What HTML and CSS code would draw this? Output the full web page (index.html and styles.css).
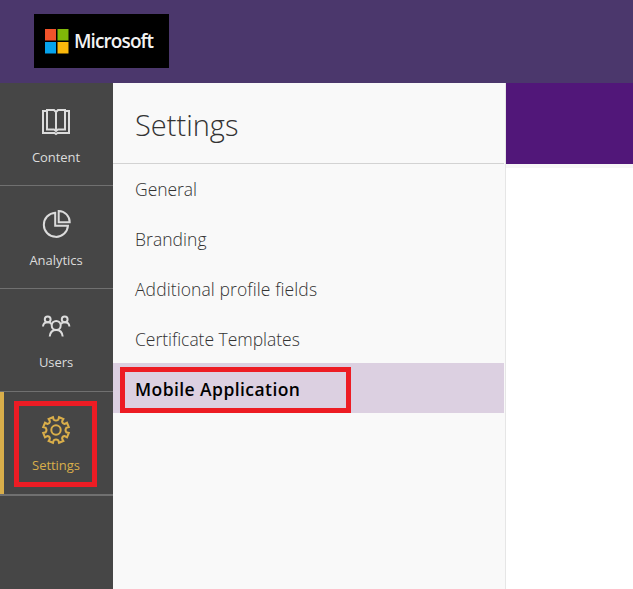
FILE: index.html
```html
<!DOCTYPE html>
<html lang="en">
<head>
<meta charset="utf-8">
<title>Settings</title>
<link rel="stylesheet" href="styles.css">
</head>
<body>
<header class="topbar">
  <div class="logo">
    <svg class="logo-mark" width="24" height="25" viewBox="0 0 24 25"><path fill="#f1532b" d="M0 0h11v11.5H0z"/><path fill="#80b808" d="M12.5 0h11v11.5h-11z"/><path fill="#06a3ec" d="M0 13h11v11.5H0z"/><path fill="#fbb80b" d="M12.5 13h11v11.5h-11z"/></svg>
    <span class="logo-text">Microsoft</span>
  </div>
</header>
<div class="shell">
  <nav class="rail">
    <a class="rail-item">
      <svg class="icon" viewBox="0 0 30 30"><path d="M5.500 5H2v22h11.500l1.500 1 1.500-1H28V5h-3.500M15 6l-2-2H6v19.500h7l2 1.500 2-1.500h7V4h-7zM15 6v19"/></svg>
      <span class="rail-label">Content</span>
    </a>
    <a class="rail-item">
      <svg class="icon analytics" viewBox="0 0 30 30"><path d="M14.200 3.700A12.100 12.100 0 1 0 27 16.700H14.200zM17.700 1.900v11.400h11A11.200 11.200 0 0 0 17.700 1.900z"/></svg>
      <span class="rail-label">Analytics</span>
    </a>
    <a class="rail-item">
      <svg class="icon" viewBox="0 0 30 30"><circle cx="15.200" cy="13.500" r="4.500"/><circle cx="6.700" cy="7.300" r="2.900"/><circle cx="23.700" cy="7.300" r="2.900"/><path d="M8.700 24.500c.4-4 3-6.500 6.500-6.500s6.100 2.500 6.500 6.500M2 14.500c.2-2.600 2.200-4.200 4.700-4.200 1.500 0 2.900.6 3.800 1.700M28.400 14.500c-.2-2.600-2.200-4.200-4.700-4.200-1.500 0-2.900.6-3.800 1.700"/></svg>
      <span class="rail-label raised">Users</span>
    </a>
    <a class="rail-item active">
      <svg class="icon gear" viewBox="0 0 30 30"><circle cx="15" cy="15" r="4.700"/><path d="M12.700 4.700 12 2.200 7.600 4 8.900 6.300Q8.800 8.800 6.300 8.900L4 7.600 2.200 12l2.500.7Q6.300 15 4.700 17.300L2.200 18 4 22.400l2.300-1.300Q8.800 21.200 8.900 23.700L7.600 26l4.400 1.800.7-2.500Q15 23.700 17.300 25.300L18 27.800 22.400 26 21.100 23.700Q21.200 21.200 23.700 21.100L26 22.400 27.800 18 25.300 17.300Q23.700 15 25.300 12.700L27.800 12 26 7.600 23.700 8.900Q21.200 8.800 21.100 6.300L22.400 4 18 2.200 17.300 4.700Q15 6.300 12.700 4.700z"/></svg>
      <span class="rail-label raised">Settings</span>
      <i class="callout callout-rail"></i>
    </a>
  </nav>
  <section class="panel">
    <h1 class="panel-title"><span>Settings</span></h1>
    <ul class="menu">
      <li class="menu-item">General</li>
      <li class="menu-item branding">Branding</li>
      <li class="menu-item fields">Additional profile fields</li>
      <li class="menu-item">Certificate Templates</li>
      <li class="menu-item selected">Mobile Application<i class="callout callout-menu"></i></li>
    </ul>
  </section>
  <main class="main"><div class="banner"></div></main>
</div>
</body>
</html>
```
FILE: styles.css
```css
* { box-sizing: border-box; }
body { margin: 0; height: 589px; overflow: hidden; display: flex; flex-direction: column; background: #fff; font-family: "Open Sans", "Noto Sans", sans-serif; }
.topbar { height: 83px; flex: none; padding: 14px 34px; background: #4b376c; }
.logo { width: 135px; height: 54px; padding: 0 0 0 11px; display: flex; align-items: center; background: #000; }
.logo-mark { flex: none; margin-right: 5px; }
.logo-text { color: #f3f3f3; font-size: 19px; font-weight: 600; line-height: 26px; letter-spacing: -.9px; }
.shell { flex: 1; display: flex; }
.rail { width: 113px; flex: none; background: #464646; }
.rail-item { position: relative; height: 103px; padding-top: 23px; display: flex; flex-direction: column; align-items: center; color: #dcdcdc; border-bottom: 1px solid #707070; }
.rail-item.active { height: 104px; color: #d9ae4a; border-bottom-width: 2px; box-shadow: inset 4px 0 #d9ae4a; }
.icon { width: 30px; height: 30px; margin-left: -1px; flex: none; fill: none; stroke: currentColor; stroke-width: 2; }
.icon.analytics { margin-left: -2px; }
.rail-label { margin: 11px 0 0 -1px; font-size: 13px; line-height: 20px; white-space: nowrap; letter-spacing: -.05px; }
.rail-label.raised { margin-top: 10px; }
.panel { width: 393px; flex: none; padding-right: 1px; background: #f9f9f9; border-right: 1px solid #e6e6e6; }
.panel-title { margin: 0; height: 80px; padding-left: 22px; display: flex; align-items: center; box-shadow: 0 1px #d3d3d3; color: #333; font-size: 29px; font-weight: 300; line-height: 40px; letter-spacing: 0; }
.panel-title span { padding-top: 4px; }
.menu { margin: 0; padding: 0; list-style: none; }
.menu-item { position: relative; height: 50px; padding: 1px 0 0 22px; color: #333; font-size: 17.500px; font-weight: 300; line-height: 50px; white-space: nowrap; letter-spacing: -.03px; }
.menu-item.branding { letter-spacing: .05px; }
.menu-item.fields { letter-spacing: .1px; }
.menu-item.selected { color: #000; background: #dcd0e1; font-weight: 600; letter-spacing: .43px; }
.callout { position: absolute; border: 5px solid #ed1c24; }
.callout-rail { left: 14px; top: 9px; width: 83px; height: 86px; }
.callout-menu { left: 7px; top: 4px; width: 231px; height: 46px; }
.main { flex: 1; }
.banner { height: 85px; background: #511779; border-bottom: 4px solid #f7f6f6; }
```
